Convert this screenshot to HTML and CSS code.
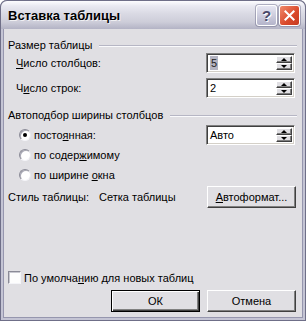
FILE: index.html
```html
<!DOCTYPE html>
<html lang="ru">
<head>
    <meta charset="UTF-8">
    <title>Вставка таблицы</title>
    <link rel="stylesheet" href="styles.css">
</head>
<body>
<div class="window">
    <div class="titlebar">
        <span class="title">Вставка таблицы</span>
        <span class="cap-btn help">?</span>
        <span class="cap-btn close">
            <svg width="21" height="21" viewBox="0 0 21 21"><path d="M6 6 L15 15 M15 6 L6 15" stroke="#fff" stroke-width="2.2" stroke-linecap="square"/></svg>
        </span>
    </div>
    <div class="client">
        <div class="group-title first"><span>Размер таблицы</span></div>
        <div class="field">
            <span class="label"><u>Ч</u>исло столбцов:</span>
            <div class="spin">
                <span class="value"><span class="sel">5</span></span>
                <span class="arrows"><span class="arr up"><i></i></span><span class="arr down"><i></i></span></span>
            </div>
        </div>
        <div class="field second">
            <span class="label">Ч<u>и</u>сло строк:</span>
            <div class="spin">
                <span class="value">2</span>
                <span class="arrows"><span class="arr up"><i></i></span><span class="arr down"><i></i></span></span>
            </div>
        </div>

        <div class="group-title"><span>Автоподбор ширины столбцов</span></div>
        <div class="radio-row first">
            <span class="radio checked"></span>
            <span class="radio-label">посто<u>я</u>нная:</span>
            <div class="spin">
                <span class="value">Авто</span>
                <span class="arrows"><span class="arr up"><i></i></span><span class="arr down"><i></i></span></span>
            </div>
        </div>
        <div class="radio-row">
            <span class="radio"></span>
            <span class="radio-label">по содер<u>ж</u>имому</span>
        </div>
        <div class="radio-row">
            <span class="radio"></span>
            <span class="radio-label">по ширине <u>о</u>кна</span>
        </div>

        <div class="style-row">
            <span class="style-label">Стиль таблицы:</span>
            <span class="style-name">Сетка таблицы</span>
            <span class="btn"><u>А</u>втоформат...</span>
        </div>

        <div class="check-row">
            <span class="checkbox"></span>
            <span>По умолча<u>н</u>ию для новых таблиц</span>
        </div>

        <div class="buttons">
            <span class="btn default">ОК</span>
            <span class="btn">Отмена</span>
        </div>
    </div>
</div>
</body>
</html>
```

FILE: styles.css
```css
* {
    box-sizing: border-box;
}
body {
    margin: 0;
    background: #fff;
    font-family: "Liberation Sans", Arial, sans-serif;
    font-size: 11px;
    color: #000;
}
u {
    text-decoration: underline;
    text-underline-offset: 1px;
}
.window {
    width: 306px;
    height: 321px;
    display: flex;
    flex-direction: column;
    background: #c4c4d4;
    border: 1px solid #6f6f88;
    border-top: none;
    border-radius: 7px 7px 0 0;
    padding: 0 2px 2px 2px;
}
.titlebar {
    height: 29px;
    margin: 0 -3px;
    display: flex;
    align-items: center;
    padding: 1px 5px 0 7px;
    border: 1px solid #6f6f88;
    border-bottom: none;
    border-radius: 7px 7px 0 0;
    background: linear-gradient(#fdfdff 0%, #e9e9f1 18%, #dadae4 45%, #cdcdd9 75%, #b3b3c5 100%);
}
.title {
    flex: 1;
    font-size: 13px;
    font-weight: bold;
    color: #000;
    text-shadow: 1px 1px 0 rgba(255, 255, 255, 0.7);
}
.cap-btn {
    width: 21px;
    height: 21px;
    border: 1px solid #fff;
    border-radius: 3px;
    display: flex;
    align-items: center;
    justify-content: center;
    box-shadow: 0 0 0 1px rgba(110, 110, 140, 0.5);
}
.help {
    margin-right: 2px;
    background: linear-gradient(#e6e6f2, #b4b4ca);
    font-size: 15px;
    font-weight: bold;
    color: #4a4a6a;
    text-shadow: 1px 1px 0 #fff;
}
.close {
    background: linear-gradient(135deg, #f08a6c, #d9482a 60%, #c63a20);
}
.client {
    flex: 1;
    display: flex;
    flex-direction: column;
    background: #e0dfe3;
    border: 1px solid #9696ae;
    border-top: none;
    padding: 0 5px 5px 4px;
}
.group-title {
    display: flex;
    align-items: center;
    height: 13px;
    line-height: 13px;
    margin-top: 11px;
}
.group-title.first {
    margin-top: 10px;
}
.group-title::after {
    content: "";
    flex: 1;
    margin-left: 7px;
    border-top: 1px solid #b6b6c4;
    border-bottom: 1px solid #fafafc;
}
.field {
    display: grid;
    grid-template-columns: 1fr 89px;
    align-items: center;
    height: 20px;
    margin-top: 1px;
    padding: 0 2px 0 8px;
}
.field.second {
    margin-top: 5px;
}
.spin {
    height: 20px;
    display: flex;
    background: #fff;
    border: 1px solid;
    border-color: #808080 #fff #fff #808080;
    box-shadow: inset 1px 1px 0 #404040, inset -1px -1px 0 #d4d0c8;
    padding: 2px;
}
.value {
    flex: 1;
    line-height: 14px;
    padding-left: 1px;
}
.sel {
    display: inline-block;
    background: #b4b4c2;
    color: #222;
    padding: 0 1px;
    line-height: 14px;
}
.arrows {
    width: 16px;
    display: flex;
    flex-direction: column;
}
.arr {
    flex: 1;
    display: flex;
    align-items: center;
    justify-content: center;
    background: #e0dfe3;
    border: 1px solid;
    border-color: #fff #404040 #404040 #fff;
    box-shadow: inset -1px -1px 0 #808080;
}
.arr i {
    width: 0;
    height: 0;
    border-left: 3px solid transparent;
    border-right: 3px solid transparent;
}
.up i {
    border-bottom: 3px solid #000;
}
.down i {
    border-top: 3px solid #000;
}
.radio-row {
    display: flex;
    align-items: center;
    height: 20px;
    padding: 0 2px 0 11px;
}
.radio-row.first {
    margin-top: 3px;
}
.radio-label {
    flex: 1;
    margin-left: 3px;
}
.radio-row .spin {
    width: 89px;
}
.radio {
    width: 12px;
    height: 12px;
    border-radius: 50%;
    background: #fff;
    border: 1px solid;
    border-color: #8a8a96 #e8e8ee #f4f4f8 #8a8a96;
    box-shadow: inset 1px 1px 0 #a8a8b4;
    display: flex;
    align-items: center;
    justify-content: center;
}
.radio.checked::after {
    content: "";
    width: 4px;
    height: 4px;
    border-radius: 50%;
    background: #000;
}
.style-row {
    display: flex;
    align-items: center;
    height: 22px;
    margin-top: 1px;
    padding-right: 1px;
}
.style-label {
    width: 91px;
}
.style-name {
    flex: 1;
}
.btn {
    width: 89px;
    height: 22px;
    display: flex;
    align-items: center;
    justify-content: center;
    background: #e0dfe3;
    border: 1px solid;
    border-color: #fff #404040 #404040 #fff;
    box-shadow: inset -1px -1px 0 #808080;
}
.btn.default {
    border-color: #000;
    box-shadow: inset 1px 1px 0 #fff, inset -1px -1px 0 #404040, inset -2px -2px 0 #808080;
}
.check-row {
    display: flex;
    align-items: center;
    height: 13px;
    margin-top: auto;
}
.checkbox {
    width: 13px;
    height: 13px;
    margin-right: 3px;
    background: #fdfdfd;
    border: 1px solid;
    border-color: #8a8a96 #f4f4f8 #f4f4f8 #8a8a96;
    box-shadow: inset 1px 1px 0 #c8c8d0;
}
.buttons {
    display: flex;
    justify-content: flex-end;
    gap: 7px;
    margin-top: 6px;
    padding-right: 1px;
}
```
